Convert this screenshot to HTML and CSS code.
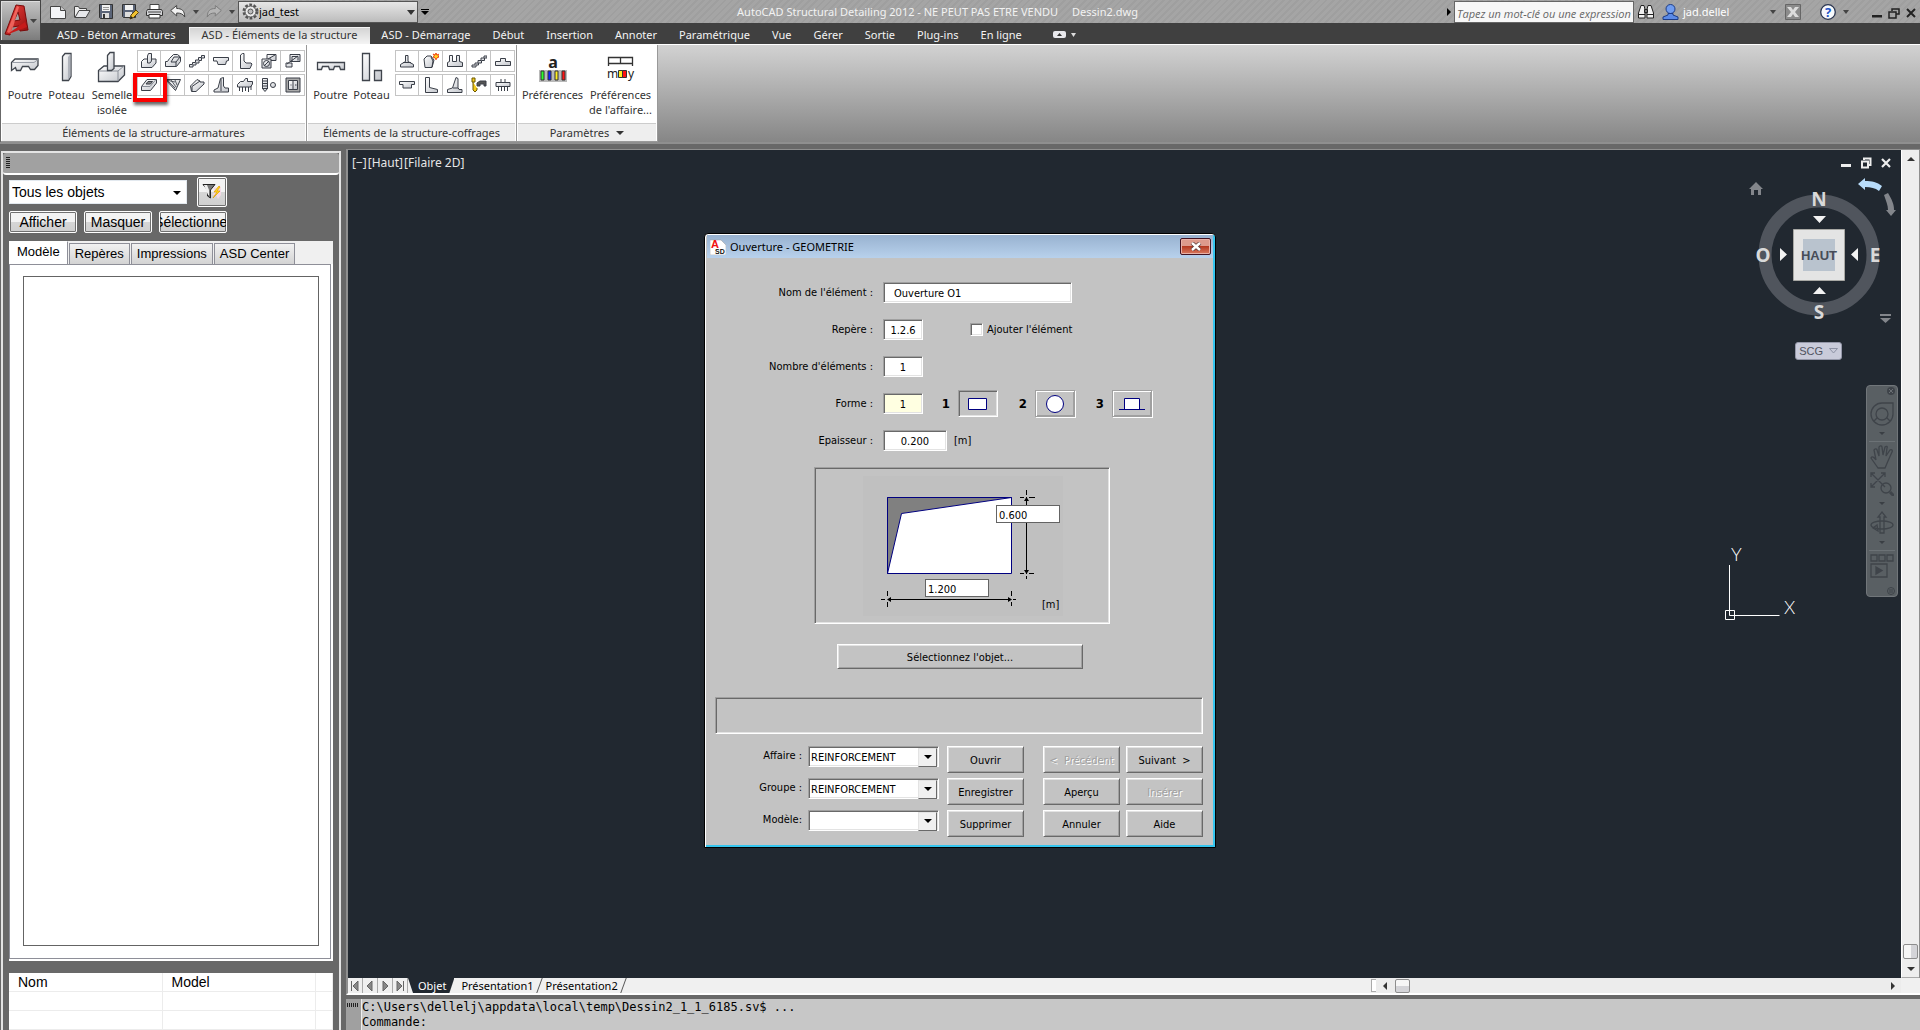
FILE: index.html
```html
<!DOCTYPE html>
<html lang="fr">
<head>
<meta charset="utf-8">
<title>AutoCAD Structural Detailing 2012</title>
<link rel="stylesheet" href="styles.css">
</head>
<body>
<svg class="defs" aria-hidden="true">
  <defs>
    <linearGradient id="steel" x1="0" y1="0" x2="1" y2="1"><stop offset="0" stop-color="#ffffff"/><stop offset="1" stop-color="#c3c6cc"/></linearGradient>
    <linearGradient id="red" x1="0" y1="0" x2="1" y2="1"><stop offset="0" stop-color="#f2433f"/><stop offset="1" stop-color="#8e0c0c"/></linearGradient>
  </defs>
</svg>
<div class="app">
  <header class="top">
    <button class="app-menu" aria-label="Menu de l'application">
      <svg width="38" height="38" viewBox="0 0 38 38"><path d="M4 32 15 3l8 1 4 24-8 1-1-5-7 1-2 8z" fill="url(#red)" stroke="#7a0a0a"/><path d="m13 19 4-9 2 8z" fill="#a4a4a4" stroke="#7a0a0a"/><path d="m6 30 10-26 2 1-8 27z" fill="#ff7a70" opacity=".7"/><path d="m5 33 19-13 2 5z" fill="#c61b1b"/><path d="M29 17h7l-3.500 4z" fill="#444"/></svg>
    </button>
    <div class="titlebar">
      <div class="quick">
        <button class="tool" aria-label="Nouveau"><svg width="16" height="14" viewBox="0 0 16 14"><path d="M.5 1.500h10l5 4v8H.5z" fill="#f4f5f7" stroke="#444"/><path d="M10.500 1.500v4h5" fill="#ccc" stroke="#444"/></svg></button>
        <button class="tool" aria-label="Ouvrir"><svg width="17" height="14" viewBox="0 0 17 14"><path d="M.5 12.500v-11h4l1 2h7v2" fill="#eee" stroke="#444"/><path d="m1 12.500 4-7h11l-4 7z" fill="#e6e7ea" stroke="#444"/></svg></button>
        <button class="tool" aria-label="Enregistrer"><svg width="14" height="15" viewBox="0 0 14 15"><path d="M.5.5h13v14H1.500l-1-1z" fill="#5a6478" stroke="#333"/><path d="M3 1h8v6H3z" fill="#f2f2f2"/><path d="M4 3.500h6M4 5.500h6" stroke="#999"/><path d="M3 9h7v5H3z" fill="#ddd"/><path d="M4 10h2v4H4z" fill="#333"/></svg></button>
        <button class="tool" aria-label="Enregistrer sous"><svg width="17" height="16" viewBox="0 0 17 16"><path d="M.5.500h13v13h-12l-1-1z" fill="#5a6478" stroke="#333"/><path d="M3 1h8v5H3z" fill="#f2f2f2"/><path d="M3 8h7v5H3z" fill="#ddd"/><path d="m8 15 1-4 5-5 2.500 2.500-5 5z" fill="#f1c232" stroke="#5d4308"/><path d="m8 15 1-3 2 2z" fill="#222"/></svg></button>
        <button class="tool" aria-label="Tracer"><svg width="17" height="15" viewBox="0 0 17 15"><path d="M4 .5h9v5H4z" fill="#fff" stroke="#444"/><path d="M1.500 5.500h14l1 2v4H.5v-4z" fill="#d5d6d9" stroke="#333"/><path d="M3 10.500h11v3.500H3z" fill="#fff" stroke="#333"/><path d="M2 8h13" stroke="#444"/></svg></button>
        <button class="tool" aria-label="Annuler"><svg width="16" height="13" viewBox="0 0 16 13"><path d="m.7 5.500 6-5v3c5 0 8 2 8 8.500-1.500-3-4-4-8-4v3z" fill="#f1f1f1" stroke="#444"/></svg></button>
        <button class="caret" aria-label="Liste des annulations"></button>
        <button class="tool" aria-label="Rétablir"><svg width="16" height="13" viewBox="0 0 16 13"><path d="m15.300 5.500-6-5v3c-5 0-8 2-8 8.500 1.500-3 4-4 8-4v3z" fill="#b5b5b5" stroke="#7d7d7d"/></svg></button>
        <button class="caret" aria-label="Liste des rétablissements"></button>
        <div class="workspace">
          <svg width="17" height="17" viewBox="0 0 17 17"><circle cx="8.500" cy="8.500" r="6.500" fill="none" stroke="#555" stroke-width="3" stroke-dasharray="2.600 1.500"/><circle cx="8.500" cy="8.500" r="5.500" fill="#e9e9e9" stroke="#555"/><circle cx="8.500" cy="8.500" r="2.500" fill="#bbb" stroke="#555"/></svg>
          <select aria-label="Espace de travail"><option>jad_test</option></select>
        </div>
        <button class="more" aria-label="Personnaliser"></button>
      </div>
      <h1 class="doc-title"><span>AutoCAD Structural Detailing 2012 - NE PEUT PAS ETRE VENDU</span><span>Dessin2.dwg</span></h1>
      <div class="info">
        <button class="expand" aria-label="Afficher"></button>
        <input class="search" type="text" placeholder="Tapez un mot-clé ou une expression" aria-label="Recherche">
        <button class="tool" aria-label="Rechercher"><svg width="16" height="15" viewBox="0 0 16 15"><path d="M3 1.500h3l1 4v8.500H.5V9zM13 1.500h-3l-1 4v8.500h6.500V9z" fill="#f0f0f0" stroke="#222"/><path d="M6.500 5.500h3v3h-3z" fill="#777" stroke="#222"/><path d="M1 10.500h6M9 10.500h6" stroke="#222"/></svg></button>
        <button class="user"><svg width="17" height="16" viewBox="0 0 17 16"><circle cx="8.500" cy="5" r="4.500" fill="#6f9cf0" stroke="#1d3c86"/><path d="M6 9.500v1.500l-5 2v2.500h15V13l-5-2V9.500z" fill="#5b8ae6" stroke="#1d3c86"/></svg><span>jad.dellel</span></button>
        <button class="caret" aria-label="Compte"></button>
        <button class="tool exchange" aria-label="Exchange"><svg width="16" height="16" viewBox="0 0 16 16"><path d="M.5.500h15v15H.5z" fill="#8b8b8b" stroke="#666"/><path d="M2 3h4l2 3 2-3h4l-4 5 4 5h-4l-2-3-2 3H2l4-5z" fill="#dcdcdc"/></svg></button>
        <button class="tool help" aria-label="Aide"><svg width="16" height="16" viewBox="0 0 16 16"><circle cx="8" cy="8" r="7.300" fill="#f7f9fc" stroke="#2a3550" stroke-width="1.300"/><text x="8" y="13" text-anchor="middle" class="help-mark">?</text></svg></button>
        <button class="caret" aria-label="Menu d'aide"></button>
        <div class="win">
          <button aria-label="Réduire"><svg width="12" height="12" viewBox="0 0 12 12"><path d="M1 8h10v2.500H1z" fill="#222"/></svg></button>
          <button aria-label="Restaurer"><svg width="12" height="12" viewBox="0 0 12 12"><path d="M4 4V2h7v5H8M1 5h7v6H1z" fill="none" stroke="#222" stroke-width="1.500"/></svg></button>
          <button aria-label="Fermer"><svg width="12" height="12" viewBox="0 0 12 12"><path d="m2 2 8 8M10 2l-8 8" stroke="#222" stroke-width="2"/></svg></button>
        </div>
      </div>
    </div>
    <nav class="tabs">
      <a href="#">ASD - Béton Armatures</a>
      <a href="#" class="on">ASD - Éléments de la structure</a>
      <a href="#">ASD - Démarrage</a>
      <a href="#">Début</a>
      <a href="#">Insertion</a>
      <a href="#">Annoter</a>
      <a href="#">Paramétrique</a>
      <a href="#">Vue</a>
      <a href="#">Gérer</a>
      <a href="#">Sortie</a>
      <a href="#">Plug-ins</a>
      <a href="#">En ligne</a>
      <button class="minimize" aria-label="Réduire le ruban"><svg width="24" height="8" viewBox="0 0 24 8"><rect x="0" y="0" width="13" height="7" rx="2" fill="#e8e8ec"/><path d="M4 5h5L6.500 2z" fill="#333"/><path d="M18 2h5l-2.500 4z" fill="#ddd"/></svg></button>
    </nav>
  </header>

  <section class="ribbon">
    <div class="panel reinforcement">
      <div class="panel-body">
        <button class="large first"><svg width="30" height="32" viewBox="0 0 30 32"><path d="M1.500 11.500 5 8h23v6.500l-3.500 4h-4l-2-3h-6l-2 4h-4l-1-3-4 3z" fill="url(#steel)" stroke="#3f444c" stroke-width="1.300"/><path d="M2 11.500h22l4-3" fill="none" stroke="#9a9fa8"/></svg><span>Poutre</span></button>
        <button class="large"><svg width="30" height="32" viewBox="0 0 30 32"><path d="M10.500 5.500 13 2.500h6v23l-2.500 4h-6z" fill="url(#steel)" stroke="#3f444c" stroke-width="1.300"/><path d="m16 6 2.500-3v22L16 29z" fill="#aeb2ba"/></svg><span>Poteau</span></button>
        <button class="large wide"><svg width="30" height="32" viewBox="0 0 30 32"><path d="M1.500 19.500 7 15h20.500v9L21 30.500H1.500z" fill="url(#steel)" stroke="#3f444c" stroke-width="1.300"/><path d="M2 20h19l6-5M21 20v10" fill="none" stroke="#8b9099"/><path d="M10.500 4.500 13 1.500h4v16l-2.500 2h-4z" fill="url(#steel)" stroke="#3f444c" stroke-width="1.300"/></svg><span>Semelle isolée</span></button>
        <div class="small-tools">
          <button aria-label="Semelle"><svg viewBox="0 0 16 16"><path d="M.5 8.500 3 6h12v4l-4 4.500H.5z"/><path d="m6.500 3 1-2.500h3V8L9 10H6.500z"/></svg></button>
          <button aria-label="Semelle filante"><svg viewBox="0 0 16 16"><path d="M.5 8.500h2l2-3 4-4h4l3 2.500v4.500l-4 5H.5z"/><path d="m6 9 3-5h6M6 9h5v4M11 9l4-5" fill="none"/></svg></button>
          <button aria-label="Escalier"><svg viewBox="0 0 16 16"><path d="M.5 11.500h3v-2h3v-2.500h3V4.500h3v-2h3v2.500h-3v2.500H10v2.500H7v2H4v2H.5z"/></svg></button>
          <button aria-label="Linteau"><svg viewBox="0 0 16 16"><path d="M.5 4.500h15v3l-2 .5-1 3.500H5L4 8H.5z"/></svg></button>
          <button aria-label="Mur de soutènement"><svg viewBox="0 0 16 16"><path d="m3.500 2 2-1.500H7V8l2 2h5l1 1-2 4.500H3.500z"/></svg></button>
          <button aria-label="Poutre coupe"><svg viewBox="0 0 16 16"><path d="M6 1.500h9v6H6z"/><path d="M1 6h9v9H1z"/><circle cx="5.500" cy="10.500" r="3"/><path d="m3 13 5-5M7 6l7-4" fill="none"/></svg></button>
          <button aria-label="Poteau coupe"><svg viewBox="0 0 16 16"><path d="M5 1.500h10v7H5zM1 10h6v4H1z"/><path d="m2 11 11-8M7 8.500V3.500h6v4" fill="none"/></svg></button>
          <button aria-label="Ouverture"><svg viewBox="0 0 16 16"><path d="M.5 9.500 6 2.500h9.500V6l-6 7.500h-9z"/><path d="m5 7 2-2.500h4.500l-2 2.500z" fill="#888"/><path d="M1 9.500h8l6-7" fill="none" stroke="#8b9099"/></svg></button>
          <button aria-label="Voile"><svg viewBox="0 0 16 16"><path d="M.5 2.500h15l-5 11z"/><path d="m2 3 8 8M6 3l5 7M10 3l2 5M1 3l9 2" fill="none" stroke-width=".8"/></svg></button>
          <button aria-label="Profilé"><svg viewBox="0 0 16 16"><path d="M1.500 9 8 2.500l3 1.500v1h4v2l-8 7.500H2.500z"/><path d="M3 14V9.500l8-5.500" fill="none"/></svg></button>
          <button aria-label="Mur"><svg viewBox="0 0 16 16"><path d="m7.500 1.500 3-1V9l1.500 2h3.500v4H1v-2l4-2z"/><path d="M8 2v12" fill="none"/></svg></button>
          <button aria-label="Radier sur pieux"><svg viewBox="0 0 16 16"><path d="m.5 7.500 3-3h3l2-3h2v3h5V7l-2 3H.5z"/><path d="M2.500 10v4M5.500 10v5M8.500 10v4M11.500 10v5M14 9v4" fill="none"/></svg></button>
          <button aria-label="Pieu"><svg viewBox="0 0 16 16"><path d="M1.500 1.500h5v10l-2.500 3-2.500-3z"/><path d="M1 4h6M1 6.500h6M1 9h6M1 11.500h6" fill="none"/><circle cx="12" cy="8" r="2.500"/></svg></button>
          <button aria-label="Plancher"><svg viewBox="0 0 16 16"><path d="M1 1h14v14H1z" fill="#aaa"/><path d="M3.500 3.500h9v9h-9z"/><path d="M8 4v9M5.500 8h1M10 8h1.500" fill="none"/></svg></button>
          <span class="highlight"></span>
        </div>
      </div>
      <h2>Éléments de la structure-armatures</h2>
    </div>
    <div class="panel formwork">
      <div class="panel-body">
        <button class="large first"><svg width="30" height="32" viewBox="0 0 30 32"><path d="M1.500 11.500h27v7h-4l-1-3h-5l-1 3h-4l-1-3h-6l-1 3h-4z" fill="url(#steel)" stroke="#3f444c" stroke-width="1.300"/></svg><span>Poutre</span></button>
        <button class="large"><svg width="30" height="32" viewBox="0 0 30 32"><path d="M5.500 2.500h7v27h-7zM17.500 19.500h7v10h-7z" fill="url(#steel)" stroke="#3f444c" stroke-width="1.300"/></svg><span>Poteau</span></button>
        <div class="small-tools five">
          <button aria-label="Semelle coffrage"><svg viewBox="0 0 16 16"><path d="M6.500 2.500h2.500v6l5.500 3v2.500H1.500v-2.500l5-3z"/><path d="M4 9.500h8" fill="none"/></svg></button>
          <button aria-label="Nouvel élément"><svg viewBox="0 0 16 16"><path d="m1 6 3-3h4l3 4-2 7.500H2z"/><path d="m8 4 2 4-1 6" fill="none"/><path d="m13 0 .8 2 2-.8L15 3l1 1-2 .8-1 2-1-2-2-.8 1.500-1L10 1l2 1z" class="spark"/></svg></button>
          <button aria-label="Longrine"><svg viewBox="0 0 16 16"><path d="M.5 13.500v-4l2-1v-6h3v6h4v-6h3v6l3 1v4z"/></svg></button>
          <button aria-label="Escalier coffrage"><svg viewBox="0 0 16 16"><path d="M1 12h3v-2h3V7.500h3V5h3V3h3v2h-2.500v2.500h-3V10h-3v2H5v2H1z"/></svg></button>
          <button aria-label="Semelle large"><svg viewBox="0 0 16 16"><path d="M.5 8.500h5v-3h5v3h5v4H.5z"/></svg></button>
          <button aria-label="Linteau coffrage"><svg viewBox="0 0 16 16"><path d="M.5 4.500h15v3h-3v3.500H4V7.500H.5z"/></svg></button>
          <button aria-label="Mur en L"><svg viewBox="0 0 16 16"><path d="M2.500.500h4v10l8 2v3h-12z"/></svg></button>
          <button aria-label="Mur à talon"><svg viewBox="0 0 16 16"><path d="m9 .500 2 1v9l1 2h3v3H.5v-3l5-1.500z"/><path d="M6 11h5" fill="none"/></svg></button>
          <button aria-label="Crochet"><svg viewBox="0 0 16 16"><path d="M1 1h3v4H1zM2 5v8l2 2 2-2v-2" class="hook"/><path d="M6 9V6l3-2h6v5h-2V7H9v2z" fill="#555"/></svg></button>
          <button aria-label="Semelle sur pieux"><svg viewBox="0 0 16 16"><path d="M1 5.500h14v4H1z"/><path d="M6 5V2M10 5V2M3.500 10v4M6.500 10v4M9.500 10v4M12.500 10v4" fill="none"/></svg></button>
        </div>
      </div>
      <h2>Éléments de la structure-coffrages</h2>
    </div>
    <div class="panel settings">
      <div class="panel-body">
        <button class="large prefs"><svg width="30" height="32" viewBox="0 0 30 32"><rect x="1" y="19" width="28" height="12" fill="#b9b9b9"/><text x="15" y="17" text-anchor="middle" class="pref-a">a</text><g stroke="#333"><path d="M3 20h3v9H3z" fill="#2bff2b"/><path d="M10 20h3v9h-3z" fill="#1220ff"/><path d="M17 20h3v9h-3z" fill="#ffee20"/><path d="M24 20h3v9h-3z" fill="#ff1212"/></g></svg><span>Préférences</span></button>
        <button class="large affair"><svg width="30" height="32" viewBox="0 0 30 32"><path d="M2.500 15V6.500h24V15M2.500 12.500h24M14.500 6v7" fill="none" stroke="#333" stroke-width="1.300"/><text x="1" y="27" class="pref-m">m</text><text x="22" y="27" class="pref-m">y</text><g stroke="#333"><path d="M12.500 19.500h4v7h-4z" fill="#ffee20"/><path d="M16.500 19.500h4v7h-4z" fill="#ff1212"/></g></svg><span>Préférences de l'affaire...</span></button>
      </div>
      <h2>Paramètres<i class="down"></i></h2>
    </div>
    <div class="ribbon-rest"></div>
  </section>

  <main class="work">
    <aside class="inspector">
      <div class="grip"><i></i></div>
      <div class="inspector-body">
        <div class="filter">
          <div class="combo"><select aria-label="Filtre"><option>Tous les objets</option></select></div>
          <button class="soft funnel" aria-label="Filtrer"><svg width="20" height="18" viewBox="0 0 20 18"><path d="m18 2-3 3-4-1 2 5-3 3 4 0 2 4 3-4V7z" fill="#f3d9e6"/><path d="M1 1.500h12L8.500 7v8L5.500 13V7z" fill="#777" stroke="#222"/><path d="M2 2h3l2 5v5H6z" fill="#eee"/><path d="m17 3-5 6h3l-4 6 7-7h-3l3-4z" fill="#ffdf1f" stroke="#e29a00" stroke-width=".7"/></svg></button>
        </div>
        <div class="actions">
          <button class="soft">Afficher</button>
          <button class="soft">Masquer</button>
          <button class="soft">Sélectionner</button>
        </div>
        <div class="pages">
          <div class="page-tabs">
            <button class="on">Modèle</button><button>Repères</button><button>Impressions</button><button>ASD Center</button>
          </div>
          <div class="page"><div class="tree"></div></div>
        </div>
        <table class="props">
          <thead><tr><th>Nom</th><th>Model</th><th></th></tr></thead>
          <tbody><tr><td></td><td></td><td></td></tr><tr><td></td><td></td><td></td></tr></tbody>
        </table>
      </div>
    </aside>

    <section class="document">
      <div class="viewport">
        <div class="canvas">
          <div class="view-label"><span>[−]</span><span>[Haut]</span><span>[Filaire 2D]</span></div>
          <svg class="ucs" width="80" height="90" viewBox="0 -10 80 90"><path d="M6.500 20v50.500h50M2.500 65.500h9v9h-9z" fill="none" stroke="#fff"/><text x="8" y="16">Y</text><text x="61" y="69">X</text></svg>
          <div class="doc-win">
            <button aria-label="Réduire la vue"><svg width="12" height="12" viewBox="0 0 12 12"><path d="M1 7h10v3H1z" fill="#eee"/></svg></button>
            <button aria-label="Restaurer la vue"><svg width="12" height="12" viewBox="0 0 12 12"><path d="M4 3V1.500h6.500V8H9M2 4.500h6v6H2z" fill="none" stroke="#eee" stroke-width="2"/></svg></button>
            <button aria-label="Fermer la vue"><svg width="12" height="12" viewBox="0 0 12 12"><path d="m2 2 8 8M10 2l-8 8" stroke="#eee" stroke-width="2.200"/></svg></button>
          </div>
          <svg class="cube" width="155" height="155" viewBox="0 0 155 155">
            <circle cx="74" cy="80" r="54" fill="none" stroke="#50555d" stroke-width="13"/>
            <path d="m4 14 7-7 7 7h-2v6h-3v-5H9v5H6v-6z" fill="#83868b"/>
            <path d="m113 9 7-6v3c7 0 12 1 17 5l-3 5c-4-3-8-4-14-4v3z" fill="#b8dcfa"/>
            <path d="m139 20 4-2c4 7 6 11 6 17h2l-5 6-5-6h2c0-5-2-9-4-15z" fill="#83868b"/>
            <path d="M48.500 54.500h51v51h-51z" fill="#e4e4e4" stroke="#a8a8a4"/>
            <path d="M58 64h32v32H58z" fill="#b9c3ce"/>
            <path d="M68 41h13l-6.500 7zM68 119h13l-6.500-7zM35 73v13l7-6.500zM113 73v13l-7-6.500z" fill="#f2f2f2"/>
            <g class="compass"><text x="74" y="31">N</text><text x="74" y="144">S</text><text x="18" y="87">O</text><text x="130" y="87">E</text></g>
            <text x="74" y="85" class="face">HAUT</text>
            <path d="M135 139h11v2h-11zM135 143h11l-5.500 5z" fill="#83868b"/>
          </svg>
          <button class="scg">SCG<svg width="9" height="6" viewBox="0 0 9 6"><path d="M.5.500h8l-4 4.500z" fill="none" stroke="#8d92a4"/></svg></button>
          <div class="navbar">
            <svg class="dot" width="8" height="8" viewBox="0 0 8 8"><circle cx="4" cy="4" r="4" fill="#3f444a"/><path d="m2 2 4 4M6 2 2 6" stroke="#6a6f74"/></svg>
            <button aria-label="Disque de navigation"><svg width="24" height="24" viewBox="0 0 24 24"><path d="M12 1h11v11a11 11 0 1 1-11-11z"/><circle cx="12" cy="12" r="6"/><path d="m7 16-3 3M17 16l3 3"/></svg></button>
            <i class="down"></i><hr>
            <button aria-label="Panoramique"><svg width="24" height="24" viewBox="0 0 24 24"><path d="M8 23 1 13c1-2 3-1 5 2L4 5c1-2 3-1 3 0l2 6V2c1-2 3-1 3 0l1 8 2-8c1-1 3-1 2 1l-1 8 4-6c1-1 3 0 2 2l-4 9-3 7z"/></svg></button>
            <button aria-label="Zoom"><svg width="24" height="24" viewBox="0 0 24 24"><path d="m1 1 14 14M15 1 1 15M1 5V1h4M11 1h4v4M1 11v4h4"/><circle cx="16" cy="16" r="5"/><path d="m20 20 4 4" stroke-width="3"/></svg></button>
            <i class="down"></i>
            <button aria-label="Orbite"><svg width="24" height="24" viewBox="0 0 24 24"><ellipse cx="12" cy="14" rx="11" ry="4"/><path d="M10 22V6H8l4-5 4 5h-2v16zM7 14l-4 3 5 3z"/></svg></button>
            <i class="down"></i><hr>
            <button aria-label="Animation"><svg width="24" height="24" viewBox="0 0 24 24"><path d="M1 1h6v6H1zM9 1h6v6H9zM17 1h6v6h-6zM1 10h16v13H1z"/><path d="m6 13 6 3.500L6 20z" fill="#3f444a"/></svg></button>
            <svg class="dot" width="8" height="8" viewBox="0 0 8 8"><circle cx="4" cy="4" r="3.500" fill="none" stroke="#3f444a"/><path d="M2 3h4M2 5h4" stroke="#3f444a"/></svg>
          </div>
        </div>
        <div class="vscroll"><i class="arrow up"></i><i class="thumb"></i><i class="arrow dn"></i></div>
      </div>
      <div class="layouts">
        <button class="nav" aria-label="Premier"><svg width="10" height="10" viewBox="0 0 10 10"><path d="M1.500 0v10M8 0v10L3 5z"/></svg></button>
        <button class="nav" aria-label="Précédent"><svg width="10" height="10" viewBox="0 0 10 10"><path d="M7 0v10L2 5z"/></svg></button>
        <button class="nav" aria-label="Suivant"><svg width="10" height="10" viewBox="0 0 10 10"><path d="M3 0v10l5-5z"/></svg></button>
        <button class="nav" aria-label="Dernier"><svg width="10" height="10" viewBox="0 0 10 10"><path d="M8.500 0v10M2 0v10l5-5z"/></svg></button>
        <button class="sheet on">Objet</button>
        <button class="sheet">Présentation1</button>
        <button class="sheet">Présentation2</button>
        <div class="hscroll"><i class="split"></i><i class="arrow lt"></i><i class="thumb"></i><i class="arrow rt"></i></div>
        <i class="corner"></i>
      </div>
      <div class="command">
        <div class="command-grip"><i></i></div>
        <div class="command-text"><p>C:\Users\dellelj\appdata\local\temp\Dessin2_1_1_6185.sv$ ...</p><p><label for="cmd">Commande:</label><input id="cmd" type="text"></p></div>
      </div>
    </section>
  </main>

  <form class="dialog" role="dialog" aria-labelledby="dlg-title">
    <div class="dialog-title">
      <svg width="16" height="16" viewBox="0 0 16 16"><path d="M0 1h11l5 5v10H0z" fill="#fff" stroke="#999" stroke-width=".5"/><text x="1" y="9" class="logo-a">A</text><text x="5" y="15" class="logo-sd">SD</text></svg>
      <h2 id="dlg-title">Ouverture - GEOMETRIE</h2>
      <button type="button" class="close" aria-label="Fermer"><svg width="12" height="9" viewBox="0 0 12 9"><path d="m2 1 8 7M10 1 2 8" stroke="#5b3a3a" stroke-width="4"/><path d="m2 1 8 7M10 1 2 8" stroke="#fff" stroke-width="2.400"/></svg></button>
    </div>
    <div class="fields">
      <div class="row"><label for="nom">Nom de l'élément :</label><input id="nom" class="sunk name" type="text" value="Ouverture O1"></div>
      <div class="row"><label for="rep">Repère :</label><input id="rep" class="sunk short" type="text" value="1.2.6"><input id="add" type="checkbox"><label for="add" class="after">Ajouter l'élément</label></div>
      <div class="row"><label for="nb">Nombre d'éléments :</label><input id="nb" class="sunk short" type="text" value="1"></div>
      <div class="row"><label for="forme">Forme :</label><input id="forme" class="sunk short pale" type="text" value="1">
        <div class="shapes">
          <b>1</b><button type="button" class="shape sel" aria-label="Rectangle"><svg width="28" height="20" viewBox="0 0 28 20"><path d="M4.500 4.500h18v11h-18z"/></svg></button>
          <b>2</b><button type="button" class="shape" aria-label="Cercle"><svg width="28" height="20" viewBox="0 0 28 20"><circle cx="14" cy="10" r="8.500"/></svg></button>
          <b>3</b><button type="button" class="shape" aria-label="Porte"><svg width="28" height="20" viewBox="0 0 28 20"><path d="M6.500 4.500h15v11h-15zM1 15.500h26"/></svg></button>
        </div>
      </div>
      <div class="row"><label for="ep">Epaisseur :</label><input id="ep" class="sunk medium" type="text" value="0.200"><span class="unit">[m]</span></div>
    </div>
    <div class="preview">
      <svg width="200" height="140" viewBox="0 0 200 140">
        <path d="M0 0h200v140H0z" fill="#c0c0c0"/>
        <path d="M24.500 21.500h124v76h-124z" fill="#fff" stroke="#000080"/>
        <path d="M24.500 97.500v-76h124l-110 16z" fill="#808080" stroke="#000080"/>
        <path d="M163.500 21v77M25 123.500h123M163.500 14v5M157 21.500h4M166 21.500h6M157 97.500h4M166 97.500h5M163.500 100v3M18 123.500h4M150 123.500h3M24.500 115v5M24.500 126v5M148.500 115v5M148.500 126v4" stroke="#000" fill="none"/>
        <path d="m161 25 2.500-4 2.500 4zM161 94l2.500 4 2.500-4zM28 121l-4 2.500 4 2.500zM145 121l4 2.500-4 2.500z"/>
        <text x="179" y="132">[m]</text>
      </svg>
      <input class="dim height" type="text" value="0.600" aria-label="Hauteur">
      <input class="dim width" type="text" value="1.200" aria-label="Largeur">
    </div>
    <button type="button" class="raised pick">Sélectionnez l'objet...</button>
    <output class="status"></output>
    <div class="footer">
      <div class="choices">
        <label for="aff">Affaire :</label><div class="drop"><select id="aff"><option>REINFORCEMENT</option></select></div>
        <label for="grp">Groupe :</label><div class="drop"><select id="grp"><option>REINFORCEMENT</option></select></div>
        <label for="mod">Modèle:</label><div class="drop"><select id="mod"><option></option></select></div>
      </div>
      <div class="stack">
        <button type="button" class="raised">Ouvrir</button>
        <button type="button" class="raised">Enregistrer</button>
        <button type="button" class="raised">Supprimer</button>
      </div>
      <div class="stack two">
        <button type="button" class="raised" disabled>&lt; &nbsp;Précédent</button>
        <button type="button" class="raised">Suivant &nbsp;&gt;</button>
        <button type="button" class="raised">Aperçu</button>
        <button type="button" class="raised" disabled>Insérer</button>
        <button type="button" class="raised">Annuler</button>
        <button type="button" class="raised">Aide</button>
      </div>
    </div>
  </form>
</div>
</body>
</html>
```
FILE: styles.css
```css
:root {
  --ui: "Noto Sans", "Open Sans", sans-serif;
  --dlg: "DejaVu Sans Condensed", "DejaVu Sans", sans-serif;
  --list: "Liberation Sans", Arial, sans-serif;
  --mono: "DejaVu Sans Mono", monospace;
  --frame: #686868;
  --canvas: #212830;
  --face: #c3c3c3;
}
* { box-sizing: border-box; }
body { margin: 0; background: var(--frame); font: 11px/15px var(--ui); color: #222; }
h1, h2, p { margin: 0; font-size: inherit; font-weight: normal; }
button, input, select { margin: 0; padding: 0; border: 0; border-radius: 0; background: none; font: inherit; color: inherit; appearance: none; }
svg { display: block; flex: none; }
i { display: block; flex: none; }
a { color: inherit; text-decoration: none; }
.defs { position: absolute; width: 0; height: 0; }
.app { position: relative; display: flex; flex-direction: column; height: 100vh; overflow: hidden; }

/* Title bar */
.top { display: grid; grid-template: 23px 21px / 41px minmax(0, 1fr); background: #404040; }
.app-menu { grid-row: 1 / 3; height: 41px; border: 1px solid #444; background: linear-gradient(#c4c4c4, #7c7c7c); box-shadow: inset 1px 1px #ddd; overflow: hidden; }
.titlebar { display: flex; align-items: center; justify-content: space-between; background: repeating-linear-gradient(135deg, #a5a5a5 0 3px, #9f9f9f 3px 5px); }
.quick, .info, .win { display: flex; align-items: center; flex: none; }
.quick { padding-left: 5px; }
.tool { display: flex; align-items: center; justify-content: center; width: 24px; height: 22px; }
.caret { width: 12px; height: 22px; display: flex; align-items: center; justify-content: center; }
.caret::before { content: ""; border: 3px solid transparent; border-top: 4px solid #444; border-bottom: 0; }
.workspace { position: relative; display: flex; align-items: center; width: 180px; height: 22px; padding-left: 3px; border: 1px solid #555; background: linear-gradient(#e6e6e6, #bcbcbc); color: #000; }
.workspace select { flex: 1; height: 20px; font-size: 11px; }
.workspace::after { content: ""; position: absolute; right: 2px; top: 8px; border: 4px solid transparent; border-top: 5px solid #333; border-bottom: 0; pointer-events: none; }
.more { width: 14px; height: 22px; display: flex; flex-direction: column; align-items: center; justify-content: center; gap: 1px; }
.more::before { content: ""; width: 8px; height: 1px; background: #000; }
.more::after { content: ""; border: 4px solid transparent; border-top: 4px solid #000; border-bottom: 0; }
.doc-title { display: flex; gap: 14px; color: #f2f2f2; white-space: nowrap; }
.expand { width: 11px; height: 22px; display: flex; align-items: center; justify-content: center; }
.expand::before { content: ""; border: 4px solid transparent; border-left: 4px solid #000; border-right: 0; }
.search { width: 180px; height: 22px; padding: 3px 2px 0; border: 1px solid #666; background: #f7f7f7; font-family: "Open Sans", sans-serif; font-style: italic; }
.search::placeholder { color: #666; opacity: 1; }
.user { display: flex; align-items: center; gap: 4px; width: 109px; height: 22px; padding-left: 4px; color: #fff; }
.exchange { width: 28px; }
.help { margin-left: 9px; }
.help-mark { font: bold 13px var(--ui); fill: #2255c8; }
.win { margin: 0 1px 0 16px; }
.win button { width: 17px; height: 22px; display: flex; align-items: center; justify-content: center; padding-top: 2px; }

.tabs { display: flex; align-items: flex-end; padding-left: 3px; color: #f4f4f4; }
.tabs a { height: 17px; padding: 0 11px; line-height: 16px; white-space: nowrap; }
.tabs a.on { background: linear-gradient(#d2d2d2, #f4f4f4); color: #333; box-shadow: inset 1px 1px #f4f4f4; }
.tabs a:first-child, .tabs a.on { padding: 0 13px; }
.minimize { margin-left: 20px; padding-bottom: 5px; }

/* Ribbon */
.ribbon { display: flex; height: 100px; border-top: 1px solid #fff; border-bottom: 2px solid #8f8f8f; padding-left: 1px; flex: none; }
.panel { display: flex; flex-direction: column; padding: 0 1px; border: solid #999; border-width: 0 1px 1px 0; background: #fff; }
.panel-body { display: flex; flex: 1; padding: 5px 0 0 2px; }
.panel h2 { display: flex; align-items: center; justify-content: center; gap: 7px; height: 18px; border-top: 1px solid #ccc; background: #eee; color: #333; }
.reinforcement { width: 306px; }
.formwork { width: 210px; }
.settings { width: 141px; }
.ribbon-rest { flex: 1; background: linear-gradient(#d2d2d2, #868686); }
.large { display: flex; flex-direction: column; align-items: center; gap: 4px; width: 41px; height: 72px; color: #333; }
.large svg { margin-top: 1px; }
.large.first { width: 42px; }
.large.wide { width: 50px; }
.formwork .large.first { width: 41px; }
.large.prefs { width: 66px; }
.large.affair { width: 72px; }
.pref-a { font: bold 16px var(--ui); fill: #222; }
.pref-m { font: 12px var(--ui); fill: #222; }
.small-tools { position: relative; display: grid; grid-template-columns: repeat(7, 24px); grid-auto-rows: 22px; row-gap: 2px; align-self: flex-start; }
.small-tools.five { grid-template-columns: repeat(5, 24px); margin-left: auto; }
.small-tools button { display: flex; align-items: center; justify-content: center; border: 1px solid #c4c4c4; border-left-width: 0; }
.small-tools button:first-child, .small-tools button:nth-child(8), .small-tools.five button:nth-child(6) { border-left-width: 1px; }
.small-tools.five button:nth-child(8) { border-left-width: 0; }
.small-tools svg { width: 16px; height: 16px; fill: url(#steel); stroke: #3a3f48; stroke-width: 1px; }
.small-tools .spark { fill: #ffd21c; stroke: #f04a10; }
.small-tools .hook { fill: #f2cb1d; stroke: #6b5600; }
.highlight { position: absolute; left: -4px; top: 23px; width: 34px; height: 29px; border: 4px solid #fb0000; box-shadow: 1px 3px 3px #0009; pointer-events: none; }
.down { border: 4px solid transparent; border-top: 4px solid #333; border-bottom: 0; }

/* Work area */
.work { display: flex; flex: 1; min-height: 0; padding-top: 5px; }
.inspector { display: flex; flex-direction: column; width: 340px; margin: 2px 5px 0 1px; border: 2px solid #e4e4e4; border-bottom: 0; font: 14px/16px var(--list); color: #000; }
.grip { display: flex; align-items: flex-start; height: 22px; padding: 4px 3px; background: #a1a1a1; border-bottom: 2px solid #fff; border-radius: 3px; flex: none; }
.grip i { width: 4px; height: 12px; background: repeating-linear-gradient(#222 0 1px, transparent 1px 2px); }
.inspector-body { display: flex; flex-direction: column; flex: 1; min-height: 0; padding: 1px 6px 0; }
.filter { display: flex; align-items: center; gap: 10px; height: 31px; }
.combo { position: relative; width: 178px; height: 24px; background: #fff; border: 1px solid #e3e9ef; }
.combo select { width: 100%; height: 22px; padding-left: 2px; }
.combo::after { content: ""; position: absolute; right: 5px; top: 10px; border: 4px solid transparent; border-top: 4px solid #000; border-bottom: 0; pointer-events: none; }
.soft { display: flex; align-items: center; justify-content: center; width: 68px; height: 22px; border: 1px solid #fff; border-radius: 2px; background: linear-gradient(#f3f3f3 50%, #d6d6d6 50%, #cfcfcf); box-shadow: inset 0 0 0 1px #707070; overflow: hidden; white-space: nowrap; }
.funnel { width: 30px; height: 30px; }
.actions { display: flex; gap: 7px; margin-top: 4px; }
.pages { display: flex; flex-direction: column; flex: 1; margin-top: 8px; width: 324px; background: #fff; }
.page-tabs { display: flex; align-items: flex-end; gap: 1px; height: 23px; background: #f0f0f0; font-size: 13px; }
.page-tabs button { height: 21px; padding: 0 5px; border: 1px solid #8e8f98; border-bottom: 0; background: linear-gradient(#f1f1f1, #d3d3d3); white-space: nowrap; }
.page-tabs button.on { height: 24px; margin-bottom: -1px; padding: 0 7px 3px; background: #fff; border-color: #fff #8e8f98 #fff #fff; }
.page { flex: 1; margin: 0 2px 2px 0; padding: 11px 11px 12px 13px; border: 1px solid #8e8f98; }
.tree { height: 100%; border: 1px solid #646464; }
.props { table-layout: fixed; width: 324px; margin-top: 12px; border-collapse: collapse; background: #fff; flex: none; }
.props th, .props td { height: 19px; padding: 0 9px; border: solid #ececec; border-width: 0 1px 1px 0; font-weight: normal; text-align: left; }
.props th:nth-child(-n+2) { width: 153px; }

/* Drawing */
.document { display: flex; flex-direction: column; flex: 1; min-width: 0; }
.viewport { display: flex; flex: 1; min-height: 0; border: solid #8f8f8f; border-width: 1px 1px 0 2px; }
.canvas { position: relative; flex: 1; background: var(--canvas); overflow: hidden; }
.view-label { display: flex; gap: 1px; padding: 5px 4px; color: #e6e6e6; font-size: 12px; }
.ucs { position: absolute; right: 98px; top: 385px; }
.ucs text { font: 300 18px Lato, sans-serif; fill: #fff; }
.doc-win { position: absolute; right: 9px; top: 7px; display: flex; gap: 8px; }
.cube { position: absolute; right: 1px; top: 25px; }
.compass { font: bold 19px var(--ui); fill: #d9d9d9; text-anchor: middle; }
.face { font: bold 13px "Liberation Sans", sans-serif; fill: #474c57; text-anchor: middle; }
.scg { position: absolute; right: 59px; top: 192px; display: flex; align-items: center; gap: 6px; height: 18px; padding: 0 3px; border: 1px solid #9497a8; border-radius: 3px; background: #c9cbda; font: 11px var(--list); color: #50535e; }
.navbar { position: absolute; right: 3px; top: 235px; display: flex; flex-direction: column; align-items: center; gap: 3px; width: 32px; height: 212px; padding: 1px 2px; border: 1px solid #71767a; border-radius: 4px; background: #595f63; }
.navbar .dot { align-self: flex-end; }
.navbar .dot:last-child { margin-top: auto; }
.navbar .dot:first-child { margin-bottom: 4px; }
.navbar button svg { fill: none; stroke: #3f444a; stroke-width: 1.3px; }
.navbar .down { border-width: 3px; border-top: 3px solid #3a3f44; border-bottom: 0; margin: 3px 0; }
.navbar hr { width: 26px; margin: 0; border: 0; border-top: 1px solid #6c7276; }
.vscroll { display: flex; flex-direction: column; align-items: center; width: 18px; padding: 7px 0 6px; background: #eeeeee; border-left: 1px solid #fff; border-bottom: 1px solid #aaa; }
.arrow { border: 4px solid transparent; }
.arrow.up { border-bottom-color: #333; border-top: 0; }
.arrow.dn { border-top-color: #333; border-bottom: 0; }
.arrow.lt { border-right-color: #333; border-left: 0; }
.arrow.rt { border-left-color: #333; border-right: 0; }
.thumb { width: 15px; height: 15px; border: 1px solid #8d8d8d; border-radius: 2px; background: linear-gradient(#f6f6f6 50%, #d4d4d8 50%); }
.vscroll .thumb { margin: auto 0 8px; background: linear-gradient(90deg, #f6f6f6 50%, #d4d4d8 50%); }

.layouts { display: flex; height: 17px; background: #f0f0f0; border-bottom: 2px solid #fff; color: #000; flex: none; border-left: 2px solid #8f8f8f; }
.layouts .nav { display: flex; align-items: center; justify-content: center; width: 15px; border-right: 1px solid #aaa; }
.layouts .nav svg { fill: #888; stroke: #666; stroke-width: 1px; }
.sheet { position: relative; height: 15px; padding: 0 5px 0 7px; line-height: 15px; white-space: nowrap; }
.sheet::after { content: ""; position: absolute; right: -1px; top: 0; width: 1px; height: 15px; background: #555; transform: skewX(-20deg); }
.sheet.on { padding: 0 8px 0 10px; background: var(--canvas); color: #fff; clip-path: polygon(0 0, 100% 0, calc(100% - 5px) 100%, 5px 100%); }
.hscroll { display: flex; align-items: center; width: 530px; margin-left: auto; background: #ececec; }
.split { width: 5px; height: 13px; margin-right: 7px; border: 1px solid #aaa; border-right: 0; background: #fff; }
.hscroll .thumb { height: 14px; margin: 0 auto 0 8px; }
.hscroll .rt { margin-right: 6px; }
.corner { width: 19px; }
.command { display: flex; height: 35px; padding-top: 4px; flex: none; }
.command-grip { width: 15px; padding: 4px 1px; background: #a0a0a0; }
.command-grip i { width: 12px; height: 4px; background: repeating-linear-gradient(90deg, #222 0 1px, transparent 1px 2px); }
.command-text { flex: 1; padding-top: 1px; background: #c7c7c7; font: 12px/15px var(--mono); color: #000; border-left: 1px solid #eee; }
.command-text p { display: flex; }
.command-text input { flex: 1; }

/* Dialog */
.dialog { position: absolute; left: calc(50% - 256px); top: 233px; width: 512px; border: 1px solid #000; border-radius: 4px 4px 0 0; background: var(--face); font: 11px/13px var(--dlg); color: #000; box-shadow: inset 1px 1px #fff, inset -2px -2px #35c5ee; padding: 1px 2px 10px; }
.dialog-title { display: flex; align-items: center; gap: 4px; height: 23px; padding: 0 2px 0 3px; background: linear-gradient(#98b2d0, #b8d1ec); font: 11px/15px var(--ui); }
.dialog-title h2 { flex: 1; }
.logo-a { font: bold 11px var(--list); fill: #f01010; }
.logo-sd { font: bold 7px var(--list); fill: #111; }
.close { display: flex; align-items: center; justify-content: center; width: 31px; height: 17px; border: 1px solid #431422; border-radius: 2px; background: linear-gradient(#dd9a8c 45%, #b53a22 50%, #d97a60); box-shadow: inset 0 0 0 1px #e8b0a6; }
.fields { display: flex; flex-direction: column; gap: 10px; padding-top: 21px; }
.row { display: flex; align-items: center; height: 27px; }
.row > label:first-child { width: 166px; margin-right: 10px; text-align: right; }
.sunk, .preview, .status, .drop, .shape.sel, .dialog input[type=checkbox] { border: 1px solid; border-color: #a0a0a0 #fff #fff #a0a0a0; box-shadow: inset 1px 1px #696969, inset -1px -1px #e3e3e3; }
.sunk { height: 21px; background: #fff; text-align: center; padding-top: 2px; }
.name { width: 189px; padding-left: 10px; text-align: left; }
.short { width: 40px; }
.medium { width: 64px; }
.pale { background: #ffffe1; }
.dialog input[type=checkbox] { width: 13px; height: 13px; margin: 0 4px 0 47px; background: #fff; }
.shapes { display: flex; align-items: center; }
.shapes b { width: 35px; padding-right: 8px; text-align: right; font-size: 13px; }
.shape { display: flex; align-items: center; justify-content: center; width: 40px; height: 27px; margin-right: 2px; border: 1px solid; border-color: #a0a0a0; box-shadow: inset 1px 1px #fff, inset -1px -1px #a0a0a0, 1px 1px #fff; }
.shape svg { fill: #fff; stroke: #000080; stroke-width: 1px; }
.unit { margin-left: 7px; }
.preview { position: relative; width: 296px; height: 157px; margin: 13px 0 0 107px; padding: 8px 48px; }
.preview svg text { font: 11px var(--dlg); }
.dim { position: absolute; width: 64px; height: 18px; padding: 2px 2px 0; border: 1px solid #646464; background: #fff; }
.dim.height { left: 181px; top: 37px; }
.dim.width { left: 110px; top: 111px; }
.raised { display: flex; align-items: center; justify-content: center; height: 27px; padding-top: 1px; border: 1px solid; border-color: #fff #696969 #696969 #fff; box-shadow: inset 1px 1px #e3e3e3, inset -1px -1px #a0a0a0; white-space: nowrap; }
.raised:disabled { color: #a0a0a0; text-shadow: 1px 1px #fff; }
.pick { width: 246px; height: 25px; margin: 20px 0 0 130px; }
.status { display: block; height: 37px; margin: 28px 10px 12px 8px; }
.footer { display: flex; justify-content: space-between; padding: 0 10px 0 8px; }
.choices { display: grid; grid-template-columns: 87px 131px; grid-auto-rows: 21px; column-gap: 6px; row-gap: 11px; line-height: 20px; text-align: right; }
.drop { position: relative; padding: 1px; background: #fff; }
.drop select { width: 100%; height: 17px; padding-left: 1px; }
.drop::before { content: ""; position: absolute; right: 1px; top: 1px; width: 17px; height: 17px; border: 1px solid; border-color: #e3e3e3 #696969 #696969 #e3e3e3; background: #f0f0f0; pointer-events: none; }
.drop::after { content: ""; position: absolute; right: 6px; top: 8px; border: 4px solid transparent; border-top: 4px solid #000; border-bottom: 0; pointer-events: none; }
.stack { display: grid; grid-template-columns: 77px; gap: 5px 6px; }
.stack.two { grid-template-columns: 77px 77px; margin-left: 11px; }
```
